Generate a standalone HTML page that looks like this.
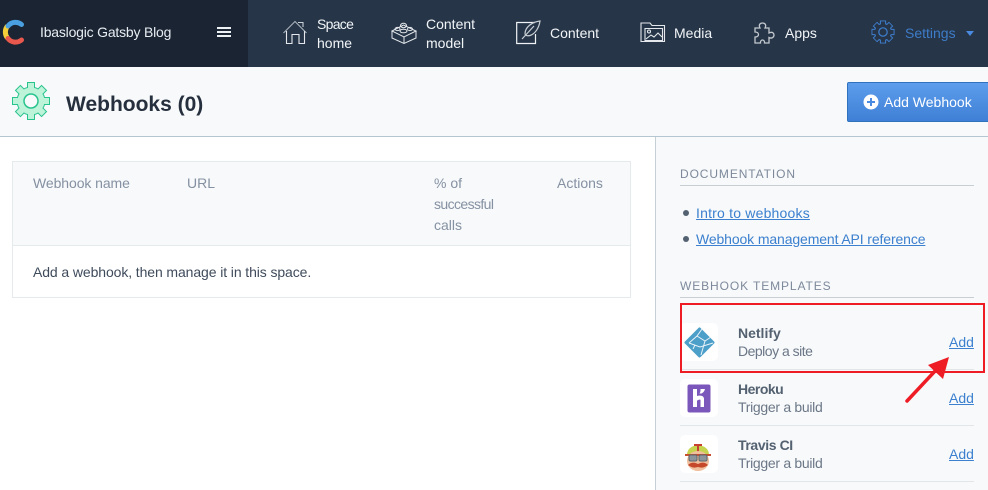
<!DOCTYPE html>
<html><head><meta charset="utf-8"><style>
html,body{margin:0;padding:0;background:#fff}
body{width:988px;height:490px;overflow:hidden;position:relative;font-family:"Liberation Sans",sans-serif;font-size:14px;color:#536171}
.a{position:absolute;white-space:nowrap}
.n{color:#f2f5f8;font-size:14px;line-height:21px}
.n2{line-height:19px}
.th{color:#8591a2;line-height:21px;font-size:14px}
.h{color:#7d899b;font-size:12px;letter-spacing:.9px}
.l{color:#3c80cf;text-decoration:underline;font-size:14px}
.b{font-weight:bold;color:#536171}
.s{color:#6b7787}
.ic{position:absolute;width:38px;height:38px;background:#fff;border-radius:5px}
.r{position:absolute;left:680px;width:294px;height:1px;background:#e3e6e9}
svg{position:absolute;overflow:visible}
</style></head><body>
<div class="a" style="left:0;top:0;width:988px;height:67px;background:#263547"></div>
<div class="a" style="left:0;top:0;width:248px;height:67px;background:#1a2433"></div>
<div class="a" style="left:0;top:67px;width:988px;height:69px;background:#f7f9fa"></div>
<div class="a" style="left:0;top:136px;width:988px;height:1px;background:#b4c6d0"></div>
<div class="a" style="left:655px;top:137px;width:333px;height:353px;background:#f7f9fa;border-left:1px solid #c5d0d6;box-sizing:border-box"></div>

<svg style="left:0;top:0" width="30" height="67" fill="none" stroke-width="5">
<path d="M7.500 26A9.500 9.500 0 0 0 7.500 38" stroke="#f4cf3a"/>
<path d="M8 26A9.500 9.500 0 0 1 21.500 24.500" stroke="#4a9fe0" stroke-linecap="round"/>
<path d="M8 38.500A9.500 9.500 0 0 0 21.500 40" stroke="#e8584d" stroke-linecap="round"/>
</svg>
<div class="a" style="left:40px;top:22px;color:#e8edf2;font-size:14px;line-height:21px;letter-spacing:-.2px">Ibaslogic Gatsby Blog</div>
<div class="a" style="left:217px;top:27px;width:14px;height:2px;background:#eef1f4"></div>
<div class="a" style="left:217px;top:31px;width:14px;height:2px;background:#eef1f4"></div>
<div class="a" style="left:217px;top:35px;width:14px;height:2px;background:#eef1f4"></div>

<svg style="left:283px;top:21px" width="24" height="24" fill="none" stroke="#e4e8ec" stroke-width="1.100">
<path d="M0.500 12L12 0.500L23.500 12" stroke="#a9b3bc"/><path d="M15 1.500H20V6" stroke="#c9d0d6"/><path d="M3.500 10V22.500H9V13.500H16V22.500H21.500V10"/></svg>
<div class="a n n2" style="left:317px;top:15px"><span style="letter-spacing:-.7px">Space</span><br>home</div>

<svg style="left:391px;top:22px" width="26" height="22" fill="none" stroke="#e4e8ec" stroke-width="1">
<path d="M1 9L12.500 3L25 9L13 15Z"/><path d="M1 9V16L13 21.500L25 16V9"/><path d="M13 15V21.500"/>
<ellipse cx="12.500" cy="9" rx="3.500" ry="1.800"/><ellipse cx="12.500" cy="3.500" rx="3" ry="2.200"/><ellipse cx="6.500" cy="7" rx="2.500" ry="1.600"/><ellipse cx="19" cy="7" rx="2.500" ry="1.600"/></svg>
<div class="a n n2" style="left:426px;top:15px">Content<br>model</div>

<svg style="left:516px;top:20px" width="26" height="25" fill="none" stroke="#f0f3f5" stroke-width="1.200">
<path d="M19 2.500H0.700V23.500H19.500V14"/><path d="M24 1C16 2 9 7 9 14C10 16 12 16 14 15.500C19 14 23 8 24 1Z" stroke="#c7ced4"/><path d="M6 19L18 6" stroke="#c7ced4"/></svg>
<div class="a n" style="left:550px;top:23px">Content</div>

<svg style="left:640px;top:21px" width="26" height="22" fill="none" stroke="#e4e8ec" stroke-width="1.100">
<path d="M3 20.500H1V2H10L12 4.500H24.500V20.500H3Z"/><path d="M5 7.500H22.500V19.500H5Z" stroke="#e4e8ec"/><circle cx="9" cy="10.500" r="1.500"/><path d="M6 18L11 14L14 16L18 12L22 16"/></svg>
<div class="a n" style="left:674px;top:23px">Media</div>

<svg style="left:752px;top:22px" width="22" height="22" fill="none" stroke="#c3c9cf" stroke-width="1.300">
<path d="M3 6H8C6 2 9 1 10.500 1C12 1 15 2 13 6H17V11C21 9 22 12 22 13C22 15 20 17 17 15.500V21H12.500C13 17 8 17 8.500 21H3V15C5 15 6.500 14 6.500 12.500C6.500 11 5 10 3 10Z"/></svg>
<div class="a n" style="left:785px;top:23px">Apps</div>

<svg style="left:871px;top:20px" width="24" height="24" viewBox="-12 -12 24 24" fill="none">
<g stroke="#3f7fd0" stroke-width="6.200"><path d="M0-11.500V11.500M-11.500 0H11.500M-8.100-8.100L8.100 8.100M-8.100 8.100L8.100-8.100"/></g>
<circle r="9" fill="#3f7fd0"/>
<g stroke="#263547" stroke-width="4.200"><path d="M0-10.600V10.600M-10.600 0H10.600M-7.500-7.500L7.500 7.500M-7.500 7.500L7.500-7.500"/></g>
<circle r="8" fill="#263547"/><circle r="4.200" stroke="#3f7fd0" stroke-width="1.200"/></svg>
<div class="a" style="left:905px;top:23px;line-height:21px;color:#3e7cc9">Settings</div>
<div class="a" style="left:966px;top:31px;border-left:4px solid transparent;border-right:4px solid transparent;border-top:5px solid #4a8ae0"></div>

<svg style="left:12px;top:81px" width="38" height="40" viewBox="-19 -20 38 40" fill="none">
<g stroke="#28c48e" stroke-width="8"><path d="M0-19V19M-19 0H19M-13.400-13.400L13.400 13.400M-13.400 13.400L13.400-13.400"/></g>
<circle r="14.500" fill="#28c48e"/>
<g stroke="#bdf3d9" stroke-width="6"><path d="M0-18V18M-18 0H18M-12.700-12.700L12.700 12.700M-12.700 12.700L12.700-12.700"/></g>
<circle r="13.500" fill="#bdf3d9"/><circle r="7" fill="#f7f9fa" stroke="#28c48e" stroke-width="1.500"/></svg>
<div class="a" style="left:66px;top:91px;font-size:21px;line-height:28px;font-weight:bold;color:#262f3d">Webhooks (0)</div>

<div class="a" style="left:847px;top:82px;width:145px;height:40px;box-sizing:border-box;background:linear-gradient(#5d9dec,#3f80d6);border:1px solid #3072be;border-radius:2px"></div>
<svg style="left:863px;top:94px" width="16" height="16"><circle cx="8" cy="8" r="7.500" fill="#fff"/><path d="M4 8H12M8 4V12" stroke="#4a8ae0" stroke-width="2"/></svg>
<div class="a" style="left:884px;top:92px;color:#fff;line-height:21px;font-size:14px">Add Webhook</div>

<div class="a" style="left:12px;top:161px;width:619px;height:137px;box-sizing:border-box;border:1px solid #e5ebed"></div>
<div class="a" style="left:13px;top:162px;width:617px;height:83px;background:#f7f9fa"></div>
<div class="a" style="left:13px;top:245px;width:617px;height:1px;background:#e5ebed"></div>
<div class="a th" style="left:33px;top:173px;letter-spacing:-.08px">Webhook name</div>
<div class="a th" style="left:187px;top:173px">URL</div>
<div class="a th" style="left:434px;top:173px">% of<br><span style="letter-spacing:-.6px">successful</span><br>calls</div>
<div class="a th" style="left:557px;top:173px">Actions</div>
<div class="a" style="left:33px;top:262px;line-height:21px;color:#3f4b5b;letter-spacing:-.1px">Add a webhook, then manage it in this space.</div>

<div class="a h" style="left:680px;top:167px;line-height:15px">DOCUMENTATION</div>
<div class="a" style="left:680px;top:185px;width:294px;height:1px;background:#c9ced3"></div>
<div class="a" style="left:683px;top:210px;width:6px;height:6px;border-radius:50%;background:#536171"></div>
<div class="a l" style="left:696px;top:203px;line-height:20px;letter-spacing:.2px">Intro to webhooks</div>
<div class="a" style="left:683px;top:236px;width:6px;height:6px;border-radius:50%;background:#536171"></div>
<div class="a l" style="left:696px;top:229px;line-height:20px;letter-spacing:-.12px">Webhook management API reference</div>
<div class="a h" style="left:680px;top:279px;line-height:15px">WEBHOOK TEMPLATES</div>
<div class="a" style="left:680px;top:297px;width:294px;height:1px;background:#c9ced3"></div>

<div class="ic" style="left:680px;top:323px"></div>
<svg style="left:684px;top:327px" width="32" height="32"><path d="M15.500 2L29 15.500L15.500 29L2 15.500Z" fill="#4b9fc9" stroke="#4b9fc9" stroke-width="3" stroke-linejoin="round"/><path d="M5 16L13 9L18 2M13 9L21 14L27 10M21 14L17 28M5 16L16 20L29 16M11 18L9 22" stroke="#eaf3f8" stroke-width="1" fill="none"/></svg>
<div class="a b" style="left:738px;top:324px;line-height:18px">Netlify</div>
<div class="a s" style="left:738px;top:342px;line-height:18px;letter-spacing:-.5px">Deploy a site</div>
<div class="a l" style="left:949px;top:332px;line-height:20px">Add</div>
<div class="r" style="top:369px"></div>

<div class="ic" style="left:680px;top:379px"></div>
<svg style="left:687px;top:384px" width="24" height="30"><rect width="23" height="28" x="0.500" y="0.500" rx="2" fill="#7b57bc"/><path d="M6 5H10V12C12 11.500 17 11 17 15V23H13.500V16C13.500 15 10 16 10 17V23H6ZM13.500 5H18C17.500 7 16.500 8.500 14.500 9.500H12.500C13.500 8 13.500 7 13.500 5Z" fill="#fff"/></svg>
<div class="a b" style="left:738px;top:380px;line-height:18px;letter-spacing:-.5px">Heroku</div>
<div class="a s" style="left:738px;top:398px;line-height:18px;letter-spacing:-.3px">Trigger a build</div>
<div class="a l" style="left:949px;top:388px;line-height:20px">Add</div>
<div class="r" style="top:425px"></div>

<div class="ic" style="left:680px;top:435px"></div>
<svg style="left:684px;top:439px" width="28" height="34">
<path d="M3 16C3 3 25 3 25 16Z" fill="#c6d34f"/><path d="M10 6H18M14 6V13" stroke="#c8402f" stroke-width="2" fill="none"/>
<ellipse cx="14" cy="22" rx="11" ry="10" fill="#f0bf9e"/>
<rect x="1" y="15" width="26" height="2" fill="#c8502f"/>
<rect x="5" y="16" width="8" height="6" rx="1.500" fill="#8b959b" stroke="#5d666c"/><rect x="15" y="16" width="8" height="6" rx="1.500" fill="#8b959b" stroke="#5d666c"/>
<path d="M4 26C8 22 12 24 14 25C16 24 20 22 24 26C20 29 17 29 14 28C11 29 8 29 4 26Z" fill="#c5482a"/>
</svg>
<div class="a b" style="left:738px;top:436px;line-height:18px;letter-spacing:-.4px">Travis CI</div>
<div class="a s" style="left:738px;top:454px;line-height:18px;letter-spacing:-.3px">Trigger a build</div>
<div class="a l" style="left:949px;top:444px;line-height:20px">Add</div>
<div class="r" style="top:481px"></div>

<div class="a" style="left:680px;top:303px;width:305px;height:70px;box-sizing:border-box;border:2px solid #ee1c25"></div>
<svg style="left:900px;top:350px" width="54" height="56"><path d="M7 51L36 20" stroke="#ee1c25" stroke-width="3.500" stroke-linecap="round"/><path d="M49 7L28 15L43 29Z" fill="#ee1c25"/></svg>
</body></html>
